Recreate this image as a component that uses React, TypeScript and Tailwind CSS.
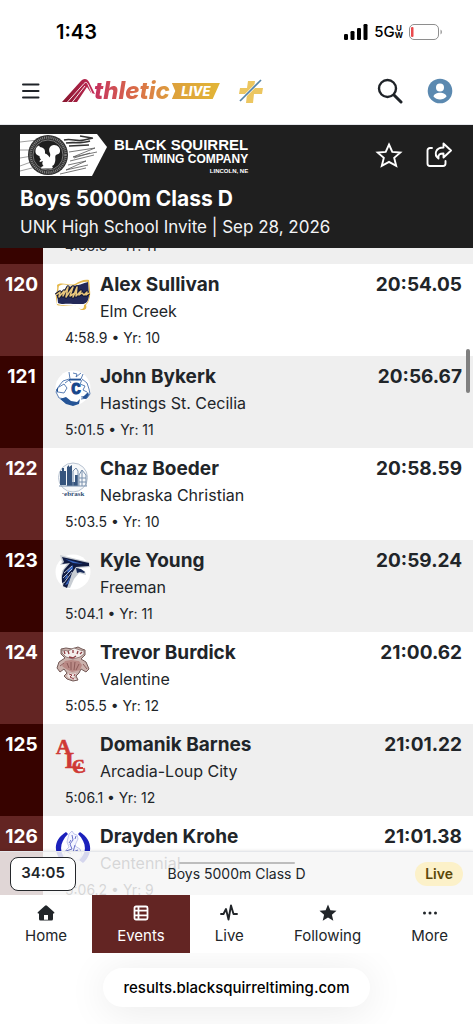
import type { ReactNode } from 'react';

type Result = {
  place: number;
  name: string;
  team: string;
  split: string;
  year: number;
  time: string;
  logo: ReactNode;
};

const logoClass = 'h-9 w-9';

function ElmCreekLogo() {
  return (
    <svg viewBox="0 0 36 36" className={logoClass} aria-hidden="true">
      <path d="M2 7c5-4 11 1 18-1 5-3 9-5 14-4l1 10c1 8-2 13-4 15 1 3 0 5-4 5-5-1-3-5-8-5-6 0-10 2-17 0L1 20c-1-5 2-6 1-13Z" fill="#e5b84a" />
      <path d="M4 8c6-4 11 1 17-1 4-2 8-4 12-3l1 13c0 5-2 9-5 10 0 2 0 4-3 4-4 0-3-4-8-4-6 0-10 1-16-1V14c2 0 1-3 2-6Z" fill="#fff" />
      <path d="M17 8c5 0 12-3 16-4l1 14c-1 6-3 8-7 8H18c-7-1-10 1-15-1L2 15c7 0 8-5 15-7Z" fill="#232958" />
      <path d="M1 17l4-3-1 5 5-6-1 5 5-9-2 10 7-10-3 9 5-3-2 4 4-10-1 9 5-5-2 4 3-2 2 2 3-3-1 3 3-2" fill="none" stroke="#151936" strokeWidth="3.500" strokeLinejoin="round" />
      <path d="M1 17l4-3-1 5 5-6-1 5 5-9-2 10 7-10-3 9 5-3-2 4 4-10-1 9 5-5-2 4 3-2 2 2 3-3-1 3 3-2" fill="none" stroke="#e7c57c" strokeWidth="1.500" strokeLinejoin="round" />
    </svg>
  );
}

function HastingsLogo() {
  return (
    <svg viewBox="0 0 36 36" className={logoClass} aria-hidden="true">
      <circle cx="18" cy="18" r="17.500" fill="#fff" />
      <g fill="none" stroke="#4a72ad" strokeWidth="0.900">
        <path d="M14 2l1 7h11l2-5M18 3l4 1-1 3 5-4M14 9l-6 2-4 5-3 6 3 6 7 1 3 2M27 9l5 4 2 6 1 5-3 4-6 1M10 13l4-3 2 3M27 10l-2 4 5 2M4 17l5-3 3 4-3 5-6-1M30 16l-2 4 4 2M26 27l5-1" />
      </g>
      <path d="M14 9h12v1.500H14ZM5 29l6-2 5 4 6 1 3-3-1 5-6 2-7-2ZM1 20l2-3v6ZM33 22l1 3-3 4-4-1Z" fill="#255496" />
      <text x="21" y="24" textAnchor="middle" fontFamily="Liberation Mono, monospace" fontSize="16" fontWeight="700" fill="#17468b" stroke="#17468b" strokeWidth="1">C</text>
    </svg>
  );
}

function ChristianLogo() {
  return (
    <svg viewBox="0 0 36 36" className={logoClass} aria-hidden="true">
      <circle cx="18" cy="15.500" r="14.500" fill="#f6f8fa" stroke="#b9c4d2" strokeWidth="1" />
      <path d="M5 9h2V6h2v3h2v14H5ZM12 5l2-2v2l3-2v17h3v4h-8ZM20 13h3v11h-3Z" fill="#36557e" />
      <path d="M18 24V9l3-3 2 3v15M24 24V13l3-5 4 5v11M24 16h7M24 20h7M27 8v16M4 24h28" fill="none" stroke="#7890ad" strokeWidth="1" />
      <text x="18" y="34" textAnchor="middle" fontFamily="Liberation Serif, serif" fontSize="7" fontWeight="700" fill="#304d73">·ebrask</text>
    </svg>
  );
}

function FreemanLogo() {
  return (
    <svg viewBox="0 0 36 36" className={logoClass} aria-hidden="true">
      <circle cx="18" cy="18" r="17.500" fill="#fff" />
      <path d="M5 1l29 7 1 5-11 1v2l6 1 1 4-7-2-5 6-4 9-7-1-2-9 1-7 5-7-7 1 2-3Z" fill="#c8cdd3" />
      <path d="M7 3l27 6v3l-13 1-4 6-5 15-4-2 1-4-2 1v-7l2-6 6-7-8 1 2-2Z" fill="#101b42" />
      <path d="M10 5l18 5-10-1ZM18 11l-6 6 1 2 5-4ZM12 20l-3 6 4-3ZM12 28l-2 3 3-1 3-8Z" fill="#3663bd" />
      <path d="M21 14l5 1 4 3-1 1-4-1-3 1Z" fill="#172957" />
      <path d="M9 19l8-7M8 24l9-9M9 29l8-11" stroke="#dce5f3" strokeWidth="0.800" />
    </svg>
  );
}

function ValentineLogo() {
  return (
    <svg viewBox="0 0 36 36" className={logoClass} aria-hidden="true">
      <path d="M6 3l5-1 6 1 6-2 4 2 3 1v5l-4 4 5 3 3 7-3 3-5-3-2 4-3 3 2 4-5 1-6-2-3-3 3-3-3-4-4 3-3-4 2-6 6-4-4-4Z" fill="#cbb2ad" stroke="#735a57" strokeWidth="1" />
      <path d="M7 4l6 1 6-3 6 2 4 1v3l-4 3-7 2-7-2-4-4Z" fill="#f4efed" stroke="#836c68" strokeWidth="0.800" />
      <path d="M13 5l1 3M18 4v3M23 5l-1 3M9 5l1 3M27 6l-2 2M14 11l4 1 3-2" fill="none" stroke="#8e3c42" strokeWidth="1.300" />
      <path d="M10 15l6-1 8 1 3 4-2 5-8 2-6-3-4-3Z" fill="#b98985" />
      <path d="M12 17l2 5M16 16v8M20 16l-1 8M24 18l-3 6M28 18l4 5M5 20l4-3" stroke="#875553" strokeWidth="0.900" fill="none" />
      <path d="M14 27l4 1 3-1-1 3-2 2 4 1-2 1-6-2-2-2Z" fill="#f0e6e4" />
      <path d="M14 28l3 1-2 2 4 2M20 28l-1 2" fill="none" stroke="#8e3c42" />
    </svg>
  );
}

function ArcadiaLogo() {
  return (
    <svg viewBox="0 0 36 36" className={logoClass} aria-hidden="true">
      <g fontFamily="Liberation Serif, serif" fontWeight="700" fill="#cf3935" stroke="#cf3935" strokeWidth="0.600">
        <text x="1" y="16" fontSize="21">A</text>
        <text x="10" y="30" fontSize="24">L</text>
        <text x="17" y="35" fontSize="19" transform="rotate(-9 22 29)">C</text>
      </g>
      <path d="M20 30h8" stroke="#cf3935" strokeWidth="2" />
    </svg>
  );
}

function CentennialLogo() {
  return (
    <svg viewBox="0 0 36 36" className={logoClass} aria-hidden="true">
      <path d="M11 2C-2 10-2 23 8 33l4-3C3 22 5 12 13 4ZM25 2c13 8 13 22 3 31l-4-3c9-8 7-18-1-26Z" fill="#1b21bc" />
      <path d="M14 4l3-3 2 3 3 1 1 4-2 4-1 3 5 3 2 6-3 5-9 1-7-3 2-7 4-4-2-5Z" fill="#f4f5ff" stroke="#b4b9e8" strokeWidth="0.800" />
      <path d="M17 5l1 5-3 4 2 5-6 2 5 3M21 6l-1 3M16 10l-2 3M20 15l-2 7 5-2" stroke="#6a72ca" fill="none" />
    </svg>
  );
}

const results: Result[] = [
  { place: 120, name: 'Alex Sullivan', team: 'Elm Creek', split: '4:58.9', year: 10, time: '20:54.05', logo: <ElmCreekLogo /> },
  { place: 121, name: 'John Bykerk', team: 'Hastings St. Cecilia', split: '5:01.5', year: 11, time: '20:56.67', logo: <HastingsLogo /> },
  { place: 122, name: 'Chaz Boeder', team: 'Nebraska Christian', split: '5:03.5', year: 10, time: '20:58.59', logo: <ChristianLogo /> },
  { place: 123, name: 'Kyle Young', team: 'Freeman', split: '5:04.1', year: 11, time: '20:59.24', logo: <FreemanLogo /> },
  { place: 124, name: 'Trevor Burdick', team: 'Valentine', split: '5:05.5', year: 12, time: '21:00.62', logo: <ValentineLogo /> },
  { place: 125, name: 'Domanik Barnes', team: 'Arcadia-Loup City', split: '5:06.1', year: 12, time: '21:01.22', logo: <ArcadiaLogo /> },
  { place: 126, name: 'Drayden Krohe', team: 'Centennial', split: '5:06.2', year: 9, time: '21:01.38', logo: <CentennialLogo /> },
];

function StatusBar() {
  return (
    <div className="flex h-16 items-center justify-between pr-8 pl-14">
      <span className="text-xl leading-6 font-semibold text-black">1:43</span>
      <div className="flex items-center">
        <svg viewBox="0 0 24 16" className="h-4 w-6" aria-label="Signal strength">
          <rect x="0" y="10" width="4" height="6" rx="1.300" />
          <rect x="6.500" y="7" width="4" height="9" rx="1.300" />
          <rect x="13" y="4" width="4" height="12" rx="1.300" />
          <rect x="19.500" y="0" width="4" height="16" rx="1.300" />
        </svg>
        <span className="ml-1.5 text-[15px] leading-5 font-medium text-black">5G</span>
        <span className="flex flex-col text-center text-[8px] leading-[7px] font-bold text-black">
          <span>U</span>
          <span>W</span>
        </span>
        <svg viewBox="0 0 34 16" className="-mr-0.5 ml-1.5 h-4 w-[34px]" aria-label="Battery low">
          <rect x="0.500" y="0.500" width="29" height="15" rx="4.500" fill="#fff" stroke="#8e8e8e" />
          <rect x="2" y="3" width="2.500" height="10" rx="1" fill="#ea4a4d" />
          <path d="M31.500 5.500c2 1 2 4 0 5Z" fill="#9a9a9a" />
        </svg>
      </div>
    </div>
  );
}

function Brand() {
  return (
    <a href="#home" aria-label="Athletic Live" className="ml-[22px] flex items-center">
      <svg viewBox="0 0 36 26" className="h-[26px] w-9" aria-hidden="true">
        <defs>
          <linearGradient id="stride" x1="0" x2="1">
            <stop stopColor="#86152d" />
            <stop offset="1" stopColor="#c52c58" />
          </linearGradient>
        </defs>
        <path d="M0 24L18 4c3-4 7-4 9 0l6 12-4-1-4-6L15 24Z" fill="url(#stride)" />
        <path d="M5 24.500L22 5.500c2-2 3-1 4 1l4 9M10 24.500L23 8" fill="none" stroke="#fff" strokeWidth="0.900" />
      </svg>
      <span className="-ml-1 bg-linear-to-r from-[#c42c5d] via-[#d96848] to-[#dda03b] bg-clip-text pr-0.5 text-2xl leading-8 font-extrabold text-transparent italic">thletic</span>
      <span className="flex h-4 w-12 items-center justify-center bg-linear-to-r from-[#dda03b] to-[#e2b536] text-[13px] leading-4 font-extrabold text-white italic [clip-path:polygon(0_0,100%_0,85%_100%,0_100%,7%_50%)]">LIVE</span>
      <svg viewBox="0 0 26 26" className="ml-[18px] h-[26px] w-[26px]" aria-hidden="true">
        <path d="M10 3h7l-1 7h9l-1 6h-8l-1 9H8l1-9H1l1-6h7Z" fill="#ecc660" />
        <path d="M23 2L2 23" stroke="#fff" strokeWidth="3" />
        <path d="M23 2L2 23" stroke="#5584a8" strokeWidth="1.700" />
      </svg>
    </a>
  );
}

function TopBar() {
  return (
    <div className="flex h-[61px] items-center border-b border-gray-200 px-[22px] pb-1.5">
      <button type="button" aria-label="Menu">
        <svg viewBox="0 0 18 16" className="h-4 w-[18px]" fill="none" stroke="#1f2328" strokeWidth="2" strokeLinecap="round">
          <path d="M1 1.500h15.500M1 8h15.500M1 14.500h15.500" />
        </svg>
      </button>
      <Brand />
      <button type="button" aria-label="Search" className="ml-auto">
        <svg viewBox="0 0 26 26" className="h-[26px] w-[26px]" fill="none" stroke="#1f2328" strokeLinecap="round">
          <circle cx="10.500" cy="10.500" r="8.500" strokeWidth="2.400" />
          <path d="M17 17l7 7" strokeWidth="3" />
        </svg>
      </button>
      <button type="button" aria-label="Account" className="-mr-0.5 ml-6">
        <svg viewBox="0 0 26 26" className="h-[26px] w-[26px]">
          <circle cx="13" cy="13" r="12.300" fill="#5b89b0" />
          <circle cx="13" cy="9.500" r="4" fill="#fff" />
          <path d="M6.500 18.500c1-5 12-5 13 0-3 4-10 4-13 0Z" fill="#fff" />
        </svg>
      </button>
    </div>
  );
}

function SquirrelBadge() {
  return (
    <svg viewBox="0 0 88 44" className="h-11 w-[88px]" aria-hidden="true">
      <path d="M0 1h77l10 13-15 29H0Z" fill="#fff" />
      <path d="M0 17h12M0 25l12-2M0 33l11-4M0 38l16-4M0 9l18-2" fill="none" stroke="#777" strokeWidth="0.700" />
      <path d="M44 7c8-2 12 2 20 0l9-2M46 10c8-1 15 1 24-2M49 13l20-1M60 3l12 2" fill="none" stroke="#333" strokeWidth="1.700" />
      <path d="M49 19l26-4-22 9 24-5M50 28l24-6M48 32l18-4-20 9 22-5M40 41l26-6M54 25l16-5" fill="none" stroke="#555" strokeWidth="0.800" />
      <circle cx="28" cy="22" r="20" fill="#303030" />
      <circle cx="28" cy="22" r="17.500" fill="none" stroke="#828282" strokeWidth="2.500" strokeDasharray="1 0.900" />
      <circle cx="28" cy="22" r="15" fill="#1f1f1f" stroke="#999" strokeWidth="0.700" />
      <path d="M15.500 17.500c0-2.500 1.500-4 3.500-5l1 1.500c3 .5 5 2 5 4.500v2c2 .5 3.500 2 4.500 4 1-2 1-3 .2-5-1.500-3.500.3-7.500 4.300-7.500 4 0 6.500 3 6 6.500-.5 3-3 2.500-4 3.500-1.500 1.500 0 4-1 7-.5 2.500-1.500 3.500-3 4l1 1.500-1.500 1H21.500c-1-.8 0-2.200 2-2.500-1.500-1.500-1.500-3.500-.5-5l-3 1c-1-.5-.5-1.500 1-2.500-1-1-1.500-2-1.500-3.500-2.500-.5-4.500-2.500-4-5.500Z" fill="#fff" />
    </svg>
  );
}

function EventHeader() {
  return (
    <section className="flex h-[123px] shrink-0 flex-col bg-[#1f1f1f] px-5 pt-2 text-white">
      <div className="flex items-start">
        <SquirrelBadge />
        <div className="ml-1.5 flex flex-col items-end pt-1 font-['Liberation_Sans',Arial,sans-serif] font-bold">
          <span className="text-[15px] leading-4">BLACK SQUIRREL</span>
          <span className="text-xs leading-3">TIMING COMPANY</span>
          <span className="pt-0.5 text-[6px] leading-2">LINCOLN, NE</span>
        </div>
        <button type="button" aria-label="Follow event" className="mt-2 ml-auto">
          <svg viewBox="0 0 28 28" className="h-7 w-7" fill="none" stroke="#fff" strokeWidth="1.900" strokeLinejoin="miter">
            <path d="M14 3.500l3.300 7.400 8 .7-6.100 5.300 2 8L14 20.800l-7.200 4.100 2-8-6.100-5.300 8-.7Z" />
          </svg>
        </button>
        <button type="button" aria-label="Share event" className="mt-2 ml-[22px]">
          <svg viewBox="0 0 28 28" className="h-7 w-7" fill="none" stroke="#fff" strokeWidth="1.900" strokeLinecap="round" strokeLinejoin="round">
            <path d="M7 7H5a2.500 2.500 0 0 0-2.500 2.500v13A2.500 2.500 0 0 0 5 25h13a2.500 2.500 0 0 0 2.500-2.500V20" />
            <path d="M18.500 2.500l7.500 7-7.500 7v-4c-4 0-5.500 1-5 5-5-4-3-11 5-11Z" />
          </svg>
        </button>
      </div>
      <h1 className="mt-2 text-[21px] leading-7 font-bold">Boys 5000m Class D</h1>
      <p className="text-[17px] leading-7 text-gray-100">UNK High School Invite | Sep 28, 2026</p>
    </section>
  );
}

function PlaceCell({ place }: { place: number }) {
  return (
    <div className={place % 2 === 1 ? 'w-[43px] shrink-0 bg-[#370300] pt-2 text-center text-[19px] leading-[26px] font-bold text-white' : 'w-[43px] shrink-0 bg-[#632523] pt-2 text-center text-[19px] leading-[26px] font-bold text-white'}>
      {place}
    </div>
  );
}

function ResultRow({ result }: { result: Result }) {
  return (
    <li className={result.place % 2 === 1 ? 'flex h-[92px] bg-[#efefef]' : 'flex h-[92px] bg-white'}>
      <PlaceCell place={result.place} />
      <div className="min-w-0 flex-1 pt-2 pr-[11px] pl-3">
        <div className="flex">
          <div className="mr-[9px] h-[52px] w-9 shrink-0 pt-1.5">{result.logo}</div>
          <div className="min-w-0 flex-1">
            <div className="flex justify-between text-[19px] leading-[26px] font-bold">
              <span>{result.name}</span>
              <span>{result.time}</span>
            </div>
            <div className="text-base leading-[26px]">{result.team}</div>
          </div>
        </div>
        <div className="mt-0.5 pl-2.5 text-sm leading-6">{`${result.split} • Yr: ${result.year}`}</div>
      </div>
    </li>
  );
}

function NowShowing() {
  return (
    <div className="absolute inset-x-0 bottom-0 grid h-11 grid-cols-[1fr_auto_1fr] items-center border-t border-gray-200 bg-[#f6f6f6]/85 px-2.5 shadow-[0_0_3px_rgba(0,0,0,0.15)]">
      <time className="flex h-[34px] w-[66px] items-center justify-center rounded-lg border border-[#24272b] bg-white text-[15px] font-semibold">34:05</time>
      <span className="absolute top-2.5 left-1/2 h-0.5 w-[116px] -translate-x-1/2 rounded-full bg-[#bdbdbd]" />
      <span className="text-sm leading-5">Boys 5000m Class D</span>
      <span className="justify-self-end rounded-full bg-[#fcf1c9] px-2.5 text-sm leading-6 font-semibold text-[#5b4708]">Live</span>
    </div>
  );
}

const tabs = [
  {
    label: 'Home',
    icon: (
      <svg viewBox="0 0 18 18" className="h-[18px] w-[18px]" fill="currentColor">
        <path fillRule="evenodd" d="M8 1.700a1.500 1.500 0 0 1 2 0l7 6.300c.8.800.3 1.500-.5 1.500H16V15a1.500 1.500 0 0 1-1.500 1.500h-11A1.500 1.500 0 0 1 2 15V9.500h-.5C.700 9.500.200 8.800 1 8Zm-1 14h4V11H7Z" />
      </svg>
    ),
  },
  {
    label: 'Events',
    icon: (
      <svg viewBox="0 0 18 18" className="h-[18px] w-[18px]" fill="none" stroke="currentColor" strokeWidth="1.800">
        <rect x="2.500" y="2.500" width="13" height="13" rx="1.500" />
        <path d="M6.500 2v14M2 6.700h14M2 11.300h14" />
      </svg>
    ),
  },
  {
    label: 'Live',
    icon: (
      <svg viewBox="0 0 18 18" className="h-[18px] w-[18px]" fill="none" stroke="currentColor" strokeWidth="1.900" strokeLinecap="round" strokeLinejoin="round">
        <path d="M1 10h2.500L6 5l2.500 10.500 2.500-14 2.500 8.500H17" />
      </svg>
    ),
  },
  {
    label: 'Following',
    icon: (
      <svg viewBox="0 0 18 18" className="h-[18px] w-[18px]" fill="currentColor">
        <path d="M9 .5l2.400 5.700 6.100.5-4.600 4 1.400 6.100L9 13.500l-5.300 3.300 1.400-6.100-4.600-4 6.100-.5Z" />
      </svg>
    ),
  },
  {
    label: 'More',
    icon: (
      <svg viewBox="0 0 18 18" className="h-[18px] w-[18px]" fill="currentColor">
        <circle cx="3.500" cy="9" r="1.500" />
        <circle cx="9" cy="9" r="1.500" />
        <circle cx="14.500" cy="9" r="1.500" />
      </svg>
    ),
  },
];

export default function App() {
  return (
    <div className="flex h-screen flex-col overflow-hidden bg-white font-['Inter',sans-serif] text-[#212529]">
      <header className="shrink-0">
        <StatusBar />
        <TopBar />
      </header>
      <EventHeader />
      <main className="relative min-h-0 flex-1 overflow-hidden">
        <ol>
          <li className="flex h-4 items-end overflow-hidden bg-[#efefef]">
            <div className="h-4 w-[43px] shrink-0 bg-[#370300]" />
            <div className="pb-1.5 pl-[22px] text-sm leading-6">4:58.8 • Yr: 11</div>
          </li>
          {results.map((result) => (
            <ResultRow key={result.place} result={result} />
          ))}
        </ol>
        <span className="absolute top-[101px] right-[3px] h-11 w-1 rounded-full bg-[#808080]" />
        <NowShowing />
      </main>
      <footer className="shrink-0">
        <nav className="flex h-[58px]">
          {tabs.map((tab) => (
            <a
              key={tab.label}
              href={`#${tab.label.toLowerCase()}`}
              className={
                tab.label === 'Events'
                  ? 'flex flex-auto flex-col items-center bg-[#632523] pt-[9px] text-[15px] leading-7 text-white'
                  : 'flex flex-auto flex-col items-center pt-[9px] text-[15px] leading-7'
              }
            >
              {tab.icon}
              <span>{tab.label}</span>
            </a>
          ))}
        </nav>
        <div className="flex h-[71px] items-start justify-center overflow-hidden pt-[15px]">
          <a href="#address" className="rounded-full bg-white px-5 text-[15px] leading-[39px] font-medium text-black shadow-[0_4px_40px_rgba(0,0,0,0.09)]">
            results.blacksquirreltiming.com
          </a>
        </div>
      </footer>
    </div>
  );
}
